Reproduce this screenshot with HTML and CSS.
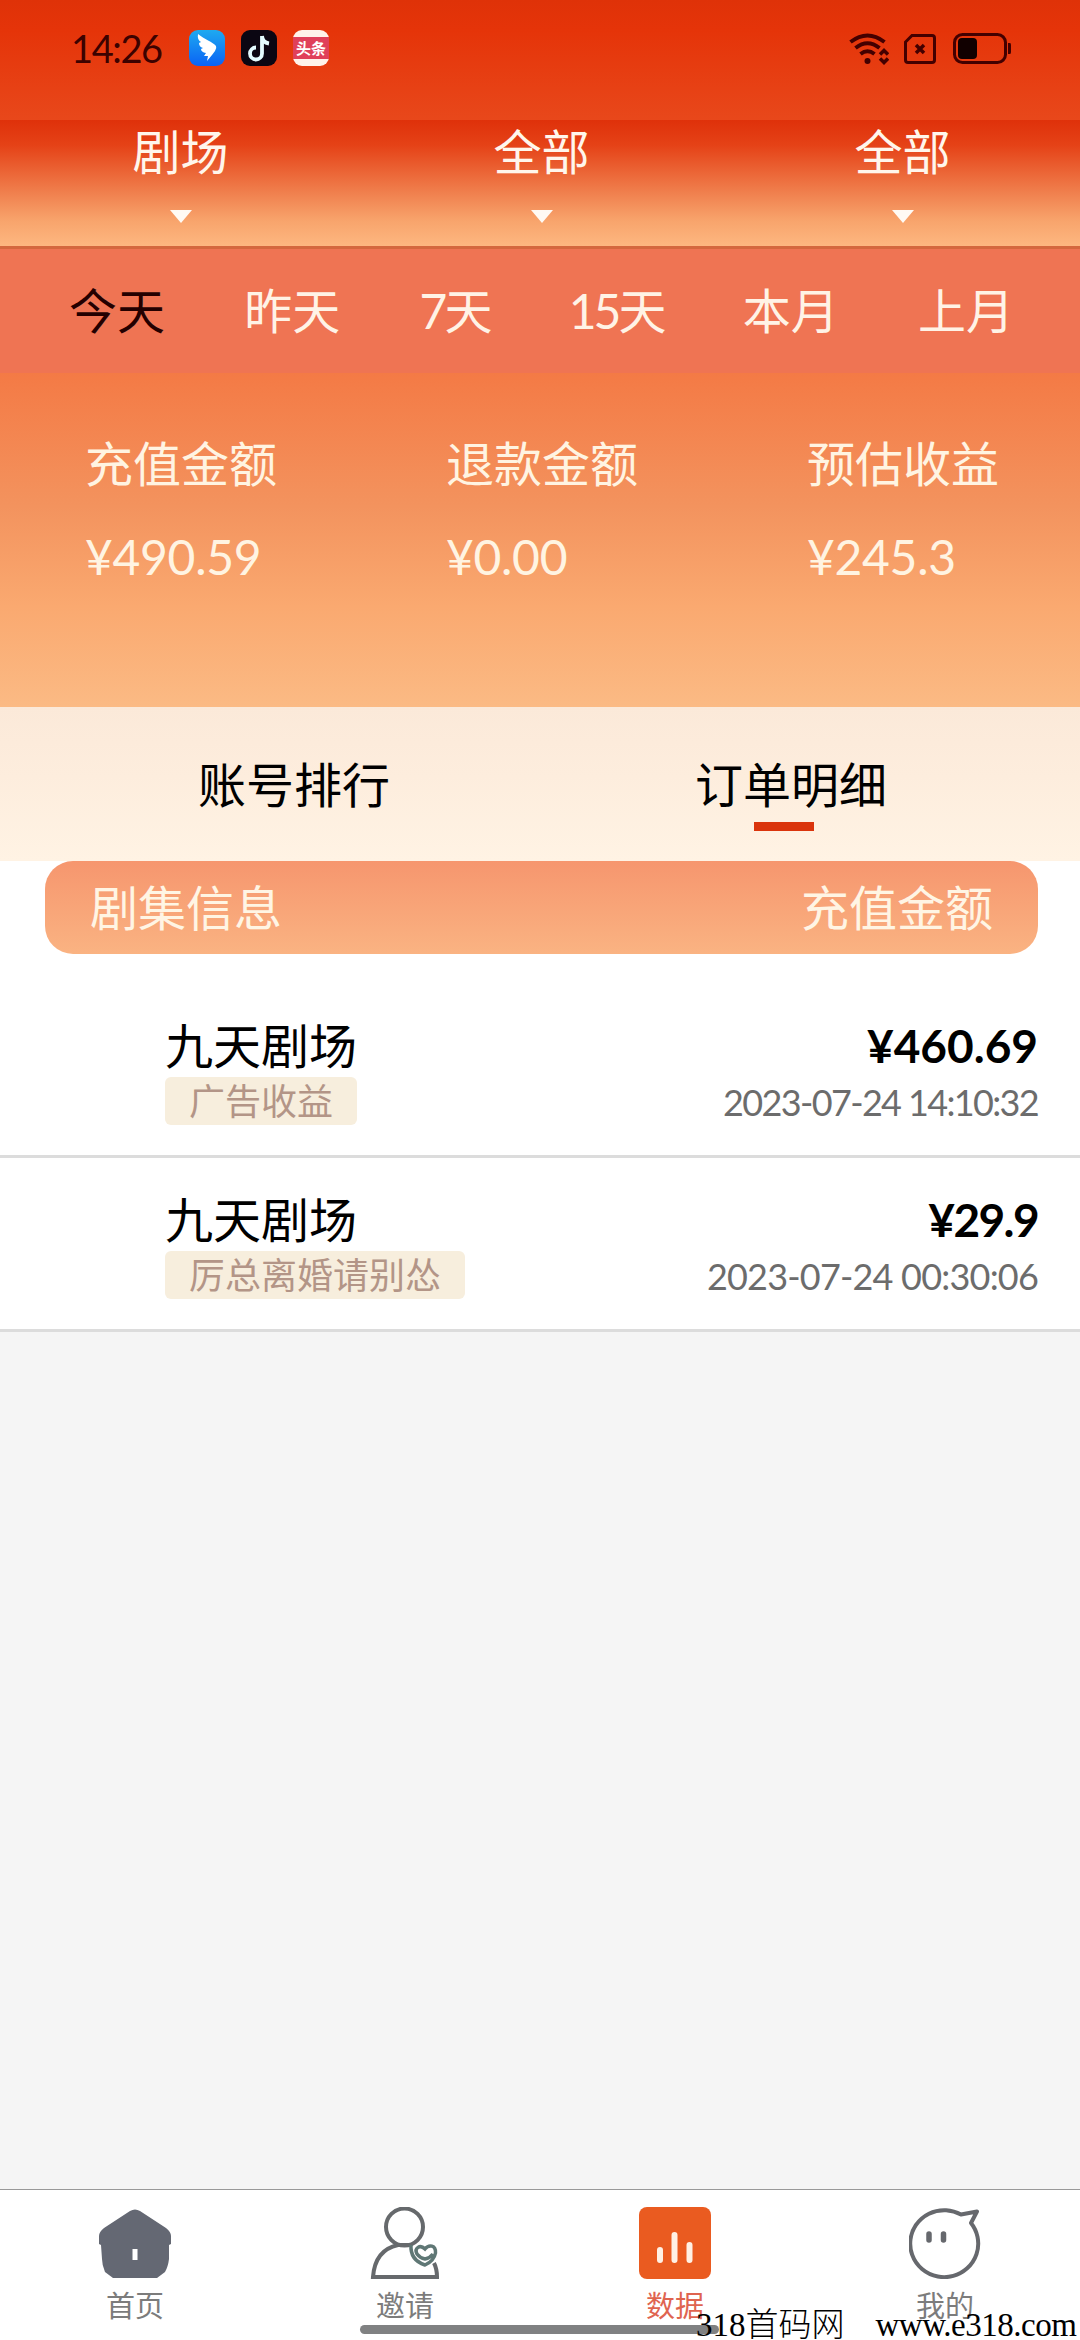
FILE: index.html
```html
<!DOCTYPE html>
<html lang="zh-CN">
<head>
<meta charset="utf-8">
<title>数据</title>
<link rel="stylesheet" href="styles.css">
</head>
<body>
<div class="screen">
  <header class="status">
    <span class="clock">14:26</span>
    <div class="apps">
      <svg class="app" viewBox="0 0 36 36"><defs><linearGradient id="wing" x1="0" y1="0" x2="0" y2="1"><stop offset="0" stop-color="#1eaaf0"/><stop offset="1" stop-color="#0a62f5"/></linearGradient></defs><rect width="36" height="36" rx="9" fill="url(#wing)"/><path d="M9 4C15 9 24 12 27 16Q28 18 26 21L23 25 18 31 19 26H15L17 23Q12 22 12 19L14 18Q10 17 10 13L12 12Q8 10 9 4Z" fill="#fff"/></svg>
      <svg class="app" viewBox="0 0 36 36"><rect width="36" height="36" rx="9" fill="#0b0612"/><path d="M21 6V23.500A6 6 0 1 1 15 17.500M21 6Q21.500 12.500 28 13.500" fill="none" stroke="#e4fbff" stroke-width="3.800"/></svg>
      <svg class="app" viewBox="0 0 36 36"><rect width="36" height="36" rx="9" fill="#fff3ea"/><rect y="7" width="36" height="22" fill="#e0405a"/><text class="toutiao" x="18" y="23.500" text-anchor="middle">头条</text></svg>
    </div>
    <div class="signals">
      <svg class="wifi" width="40" height="32" viewBox="0 0 40 32" fill="none" stroke="#400" stroke-width="4"><path d="M1.500 9Q18.500-4 35.500 9M6.500 15Q18.500 5.500 30.500 15M11.500 21Q18.500 15.500 25.500 21"/><circle cx="18.500" cy="28" r="3" fill="#400" stroke="none"/><path d="M31 21.500L35 17.500 39 21.500M31 25.500L35 29.500 39 25.500" stroke-width="3.500"/></svg>
      <svg class="sim" width="32" height="30" viewBox="0 0 32 30" fill="none" stroke="#400" stroke-width="3"><path d="M8 1.500H28Q30.500 1.500 30.500 4V26Q30.500 28.500 28 28.500H4Q1.500 28.500 1.500 26V8Z"/><path d="M12 11L20 19M20 11L12 19" stroke-width="3.500"/></svg>
      <svg width="58" height="32" viewBox="0 0 58 32"><rect x="1.500" y="1.500" width="51" height="28" rx="8" fill="none" stroke="#400" stroke-width="3"/><rect x="5" y="5" width="19" height="21" rx="4" fill="#100"/><path d="M55 10H57Q58 10 58 12V19Q58 21 57 21H55Z" fill="#400"/></svg>
    </div>
  </header>

  <div class="filters">
    <div class="filter">剧场<i class="caret"></i></div>
    <div class="filter">全部<i class="caret"></i></div>
    <div class="filter">全部<i class="caret"></i></div>
  </div>

  <nav class="periods">
    <span class="period is-active">今天</span>
    <span class="period">昨天</span>
    <span class="period period-days">7天</span>
    <span class="period period-days">15天</span>
    <span class="period">本月</span>
    <span class="period">上月</span>
  </nav>

  <section class="stats">
    <div class="stat"><span>充值金额</span><span class="stat-value">¥490.59</span></div>
    <div class="stat"><span>退款金额</span><span class="stat-value">¥0.00</span></div>
    <div class="stat"><span>预估收益</span><span class="stat-value">¥245.3</span></div>
  </section>

  <div class="tabs">
    <div class="tab">账号排行</div>
    <div class="tab is-current">订单明细</div>
  </div>

  <main class="orders">
    <div class="orders-head"><span>剧集信息</span><span>充值金额</span></div>
    <article class="order">
      <div class="order-info"><span class="order-name">九天剧场</span><span class="tag">广告收益</span></div>
      <div class="order-sum"><span class="amount">¥460.69</span><time class="time time-tight">2023-07-24 14:10:32</time></div>
    </article>
    <article class="order">
      <div class="order-info"><span class="order-name">九天剧场</span><span class="tag">厉总离婚请别怂</span></div>
      <div class="order-sum"><span class="amount amount-tight">¥29.9</span><time class="time">2023-07-24 00:30:06</time></div>
    </article>
  </main>

  <footer class="dock">
    <a class="dock-item">
      <svg class="dock-icon" viewBox="0 0 72 72"><path d="M31 4Q36 1 41 4L67 21Q72 25 72 29V37L70 38V52Q69 60 66 65L58 71H14L6 65Q3 58 3 52L2 38 0 37V29Q0 25 5 21Z" fill="#646873"/><rect x="33.500" y="42" width="5" height="11" fill="#fff"/></svg>
      首页</a>
    <a class="dock-item">
      <svg class="dock-icon" viewBox="0 0 72 72" fill="none" stroke="#66696c" stroke-width="4"><circle cx="35.500" cy="20" r="18.500"/><path d="M42 38H29Q6 43 4 70H68Q68 62 65 56"/><path d="M42 38Q41 53 56 58Q65 54 66.500 46C67 38 60 37 56 42C51 37 45 41 48 47Q51 51 56 52Q61 51 64 47" stroke="#5f7775" stroke-width="3.500"/></svg>
      邀请</a>
    <a class="dock-item is-on">
      <svg class="dock-icon" viewBox="0 0 72 72"><rect width="72" height="72" rx="8" fill="#ea5b20"/><path d="M21 43V53M35.500 28V53M50.500 38V53" stroke="#fff0e4" stroke-width="6" stroke-linecap="round"/></svg>
      数据</a>
    <a class="dock-item">
      <svg class="dock-icon" viewBox="0 0 72 72" fill="none" stroke="#66686d" stroke-width="4"><path d="M52 7.500A34 33.500 0 1 0 62 16L68 4.500Z" stroke-linejoin="round"/><path d="M20 27V33M34.500 27V33" stroke-width="5.500" stroke-linecap="round"/></svg>
      我的</a>
    <i class="home-bar"></i>
    <div class="watermark"><span>318<b class="site">首码网</b></span><span class="url">www.e318.com</span></div>
  </footer>
</div>
</body>
</html>
```

FILE: styles.css
```css
* { box-sizing: border-box; }

body {
  margin: 0;
  font-family: Lato, "Noto Sans CJK SC", sans-serif;
  font-size: 48px;
  line-height: 60px;
  color: #000;
}

.screen {
  width: 1080px;
  height: 2340px;
  display: flex;
  flex-direction: column;
  overflow: hidden;
  background: #f5f5f5;
}

.status {
  height: 120px;
  flex: none;
  display: flex;
  align-items: flex-start;
  padding: 30px 69px 0 71px;
  background: linear-gradient(#df3208, #e53409 25%, #e8481b);
}
.clock {
  width: 118px;
  font-size: 38px;
  line-height: 36px;
  letter-spacing: -1.4px;
  color: #3c0200;
}
.apps { display: flex; gap: 16px; }
.app { width: 36px; height: 36px; }
.toutiao { font: bold 15px "Noto Sans CJK SC", sans-serif; fill: #fff; }
.signals { display: flex; align-items: center; margin: 3px 0 0 auto; }
.wifi { margin-right: 15px; }
.sim { margin-right: 17px; }

.filters {
  height: 126px;
  flex: none;
  display: flex;
  background: linear-gradient(#df310a, #e54217 20%, #f0804e 58%, #f8a46c 80%, #fdb780);
}
.filter {
  flex: 0 0 361px;
  display: flex;
  flex-direction: column;
  align-items: center;
  padding-top: 2px;
  color: #fff6ec;
}
.caret {
  margin-top: 28px;
  border: 11px solid transparent;
  border-top: 13px solid #fffaf4;
  border-bottom: 0;
}

.periods {
  height: 127px;
  flex: none;
  display: flex;
  justify-content: space-between;
  padding: 32px 66px 0 69px;
  border-top: 3px solid #d4683e;
  background: #ef7453;
  color: #fff3e6;
}
.period-days { letter-spacing: -3px; }
.period.is-active { color: #240000; }

.stats {
  height: 334px;
  flex: none;
  display: flex;
  padding-top: 61px;
  background: linear-gradient(#f47a45, #f3935e 40%, #faa970 70%, #fbba84);
  color: #fff4e2;
}
.stat {
  flex: 0 0 361px;
  display: flex;
  flex-direction: column;
  gap: 33px;
  padding-left: 85px;
}
.stat-value { letter-spacing: -0.3px; }

.tabs {
  height: 154px;
  flex: none;
  display: flex;
  justify-content: space-between;
  padding: 48px 193px 0 198px;
  background: linear-gradient(#fbe9d9, #fdeddd 45%, #fff3e4);
}
.tab { position: relative; }
.is-current::after {
  content: "";
  position: absolute;
  left: 59px;
  top: 67px;
  width: 60px;
  height: 9px;
  background: #da340c;
}

.orders { background: #fff; }
.orders-head {
  display: flex;
  justify-content: space-between;
  height: 93px;
  margin: 0 42px 27px 45px;
  padding: 17px 45px;
  border-radius: 28px;
  background: linear-gradient(#f6966e, #fab382);
  color: #fff5e4;
}
.order {
  height: 177px;
  display: flex;
  justify-content: space-between;
  padding: 35px 42px 0 165px;
  border-bottom: 3px solid #dcdcdc;
}
.order + .order { height: 174px; padding-top: 32px; }
.order-info, .order-sum { display: flex; flex-direction: column; }
.order-info { align-items: flex-start; }
.order-sum { align-items: flex-end; }
.tag {
  height: 48px;
  margin-top: 1px;
  padding: 0 24px;
  border-radius: 6px;
  background: #f7eedd;
  color: #b39587;
  font-size: 36px;
  line-height: 48px;
}
.amount { font-weight: 700; font-size: 46px; }
.amount-tight { letter-spacing: -1.6px; }
.time { font-size: 36px; line-height: 52px; letter-spacing: -0.8px; color: #6c6c6c; }
.time-tight { letter-spacing: -1.65px; }

.dock {
  position: relative;
  height: 151px;
  flex: none;
  display: flex;
  margin-top: auto;
  border-top: 1px solid #999;
  background: #fff;
}
.dock-item {
  flex: 1;
  display: flex;
  flex-direction: column;
  align-items: center;
  padding-top: 17px;
  font-size: 29px;
  line-height: 54px;
  color: #7c7c7c;
}
.dock-item.is-on { color: #df6450; }
.dock-icon { width: 72px; height: 72px; flex: none; }
.home-bar {
  position: absolute;
  left: 360px;
  bottom: 6px;
  width: 359px;
  height: 9px;
  border-radius: 5px;
  background: #808182;
}
.watermark {
  position: absolute;
  left: 696px;
  bottom: -1px;
  display: flex;
  gap: 31px;
  font: 33px/32px "Liberation Serif", "Noto Sans CJK SC", serif;
  white-space: nowrap;
  color: #000;
}
.site { font-weight: 300; }
.url { letter-spacing: -0.5px; }
```
